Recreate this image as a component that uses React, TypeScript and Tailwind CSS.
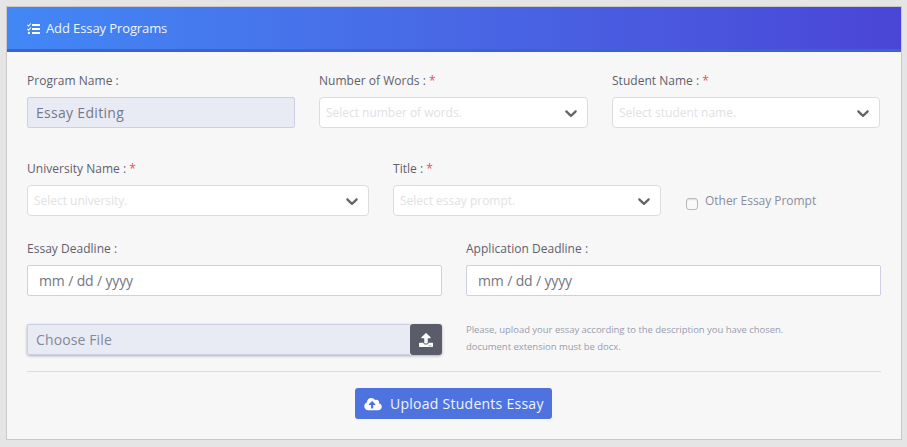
import React from "react";
import { FaUpload, FaCloudUploadAlt } from "react-icons/fa";

function TasksIcon() {
  return (
    <svg viewBox="0 0 13 13" className="mr-[6px] size-[13px] text-white" fill="currentColor">
      <rect x="5" y="2" width="8" height="2.1" rx="0.3" />
      <rect x="5" y="6" width="8" height="2.1" rx="0.3" />
      <rect x="5" y="10" width="8" height="2.1" rx="0.3" />
      <circle cx="1.9" cy="11" r="1.15" />
      <path d="M0.4 2.9l1.2 1.1 2.2-2.5M0.4 7l1.2 1.1 2.2-2.5" fill="none" stroke="currentColor" strokeWidth="1.1" />
    </svg>
  );
}

function Label({ children, required = false }: { children: React.ReactNode; required?: boolean }) {
  return (
    <label className="block h-[33px] text-[12px] leading-[33px] tracking-[0.02px] text-[#5f5f6e]">
      {children}
      {required && <span className="text-[#e55353]"> *</span>}
    </label>
  );
}

function SelectField({ label, placeholder }: { label: string; placeholder: string }) {
  return (
    <div>
      <Label required>{label}</Label>
      <div className="flex h-[31px] items-center justify-between rounded border border-[#dcdcdf] bg-white pr-[6px] pl-[6px]">
        <span className="text-[12px] tracking-[-0.02px] text-[#e1e1e4]">{placeholder}</span>
        <svg viewBox="0 0 20 20" className="size-5 fill-[#666]">
          <path d="M4.516 7.548c0.436-0.446 1.043-0.481 1.576 0l3.908 3.747 3.908-3.747c0.533-0.481 1.141-0.446 1.574 0 0.436 0.445 0.408 1.197 0 1.615-0.406 0.418-4.695 4.502-4.695 4.502-0.217 0.223-0.502 0.335-0.787 0.335s-0.57-0.112-0.789-0.335c0 0-4.287-4.084-4.695-4.502s-0.436-1.17 0-1.615z" />
        </svg>
      </div>
    </div>
  );
}

function DateField({ label }: { label: string }) {
  return (
    <div>
      <Label>{label}</Label>
      <div className="flex h-[31px] items-center rounded-[2px] border border-[#cfcfe0] bg-white pl-[11px] text-[14px] tracking-[-0.14px] text-[#75757f]">
        mm / dd / yyyy
      </div>
    </div>
  );
}

export default function App() {
  return (
    <div className="h-[447px] bg-[#e5e5e5] p-[6px] pr-[5px] font-['Open_Sans',sans-serif]">
      <div className="h-[434px] border border-[#c8c8c8] bg-[#f7f7f7]">
        <header className="flex h-[45px] items-center border-b-3 border-[#3c62d2] bg-linear-to-r from-[#4287f5] to-[#4a45d6] px-5 text-[13px] tracking-[-0.1px] text-[#f0f4ff]">
          <TasksIcon />
          <span className="pt-px">Add Essay Programs</span>
        </header>
        <form className="px-5 pt-3">
          <div className="grid grid-cols-[268px_269px_268px] gap-x-6">
            <div>
              <Label>Program Name :</Label>
              <div className="flex h-[31px] items-center rounded-[2px] border border-[#ccd0e2] bg-[#e8ebf4] pl-2 text-[14px] tracking-[0.3px] text-[#75798a]">
                Essay Editing
              </div>
            </div>
            <SelectField label="Number of Words :" placeholder="Select number of words." />
            <SelectField label="Student Name :" placeholder="Select student name." />
          </div>
          <div className="mt-6 grid grid-cols-[342px_268px_1fr] gap-6">
            <SelectField label="University Name :" placeholder="Select university." />
            <SelectField label="Title :" placeholder="Select essay prompt." />
            <label className="flex items-start pt-[40px] text-[12px] text-[#8a8d9f]">
              <span className="mt-[6px] mr-[7px] ml-px size-3 rounded-[3px] border border-[#b9b9b9] bg-[#f9f9f9] shadow-[inset_0_1px_1px_#dedede]" />
              <span className="leading-[18px] tracking-[-0.03px]">Other Essay Prompt</span>
            </label>
          </div>
          <div className="mt-4 grid grid-cols-2 gap-6">
            <DateField label="Essay Deadline :" />
            <DateField label="Application Deadline :" />
          </div>
          <div className="mt-7 grid grid-cols-2 gap-6">
            <div className="flex h-[31px] rounded-[3px] shadow-[0_1px_3px_rgba(0,0,0,0.3)]">
              <div className="flex flex-1 items-center rounded-l-[2px] border border-r-0 border-[#ccd0e2] bg-[#e8ebf4] pl-2 text-[14px] tracking-[0.12px] text-[#858898]">
                Choose File
              </div>
              <button type="button" className="flex w-8 items-center justify-center rounded-[3px] bg-[#5a5c69] text-white">
                <FaUpload className="size-[14px]" />
              </button>
            </div>
            <p className="-mt-[3px] text-[9.5px] leading-[17px] tracking-[-0.03px] text-[#9a9cad]">
              Please, upload your essay according to the description you have chosen.
              <br />
              document extension must be docx.
            </p>
          </div>
          <hr className="mt-4 border-[#dcdcdc]" />
          <button type="button" className="mt-4 ml-[328px] flex h-[31px] w-[197px] items-center rounded-[3px] bg-[#4e73df] pl-[9px] text-[14px] tracking-[0.26px] whitespace-nowrap text-[#eef3ff]">
            <FaCloudUploadAlt className="mr-2 h-[14px] w-[18px] text-white" />
            Upload Students Essay
          </button>
        </form>
      </div>
    </div>
  );
}
